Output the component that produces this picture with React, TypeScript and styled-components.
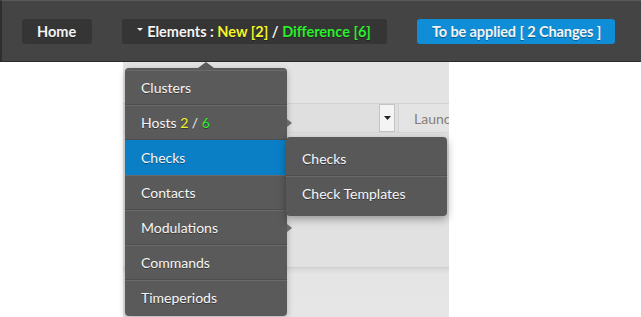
import styled, { createGlobalStyle } from "styled-components";

const GlobalStyle = createGlobalStyle`
  html, body {
    margin: 0;
    padding: 0;
    background: #ffffff;
    font-family: Lato, "Liberation Sans", sans-serif;
  }
`;

interface MenuEntry {
  label: string;
  counts?: { fresh: number; diff: number };
  hasChildren?: boolean;
  active?: boolean;
  children?: string[];
}

const menuItems: MenuEntry[] = [
  { label: "Clusters" },
  { label: "Hosts", counts: { fresh: 2, diff: 6 }, hasChildren: true },
  { label: "Checks", hasChildren: true, active: true, children: ["Checks", "Check Templates"] },
  { label: "Contacts" },
  { label: "Modulations", hasChildren: true },
  { label: "Commands" },
  { label: "Timeperiods" },
];

const App = () => {
  return (
    <Page>
      <GlobalStyle />
      <TopBar>
        <BarButton>
          <span>Home</span>
        </BarButton>
        <BarButton>
          <Caret />
          <span>
            Elements : <NewText>New [2]</NewText> / <DiffText>Difference [6]</DiffText>
          </span>
        </BarButton>
        <BarButton primary>
          <span>To be applied [ 2 Changes ]</span>
        </BarButton>
      </TopBar>

      <Content>
        <Panel>
          <PanelHead />
          <Toolbar>
            <SelectBox>
              <SelectArrow>
                <svg width="7" height="4" viewBox="0 0 7 4">
                  <path d="M0 0 L7 0 L3.5 4 Z" fill="#222" />
                </svg>
              </SelectArrow>
            </SelectBox>
            <LaunchButton>Launch</LaunchButton>
          </Toolbar>
          <PanelBody />
          <PanelFoot />
        </Panel>

        <Menu>
          <MenuPointer />
          {menuItems.map((item) => (
            <MenuItem key={item.label} active={item.active}>
              <span>
                {item.label}
                {item.counts && (
                  <>
                    {" "}
                    <NewText>{item.counts.fresh}</NewText> / <DiffText>{item.counts.diff}</DiffText>
                  </>
                )}
              </span>
              {item.hasChildren && <SubArrow />}
              {item.children && (
                <SubMenu>
                  {item.children.map((child) => (
                    <MenuItem key={child}>{child}</MenuItem>
                  ))}
                </SubMenu>
              )}
            </MenuItem>
          ))}
        </Menu>
      </Content>
    </Page>
  );
};

export default App;

const Page = styled.div`
  width: 641px;
  height: 317px;
  overflow: hidden;
  display: flex;
  flex-direction: column;
`;

const TopBar = styled.div`
  height: 60px;
  flex-shrink: 0;
  display: flex;
  align-items: center;
  gap: 30px;
  padding-left: 20px;
  background: #444444;
  border-top: 1px solid #5a5a5a;
  border-left: 2px solid #2e2e2e;
  border-bottom: 1px solid #2a2a2a;
`;

const BarButton = styled.div<{ primary?: boolean }>`
  height: 25px;
  display: flex;
  align-items: center;
  padding: ${(props) => (props.primary ? "0 14px 0 15px" : "0 16px 0 15px")};
  border-radius: 3px;
  background: ${(props) => (props.primary ? "#0f8dd6" : "#353535")};
  color: #f4f4f4;
  font-size: 14.5px;
  font-weight: 700;
  letter-spacing: ${(props) => (props.primary ? "-0.1px" : "0")};
  white-space: pre;
  text-shadow: 0 1px 0 rgba(0, 0, 0, 0.35);
`;

const Caret = styled.span`
  width: 0;
  height: 0;
  margin-right: 4px;
  margin-top: -3px;
  border-left: 3px solid transparent;
  border-right: 3px solid transparent;
  border-top: 3px solid #f2f2f2;
`;

const NewText = styled.span`
  color: #f5f52a;
`;

const DiffText = styled.span`
  color: #2bef2b;
`;

const Content = styled.div`
  position: relative;
  flex: 1;
  display: flex;
  padding-left: 123px;
`;

const Panel = styled.div`
  width: 326px;
  display: flex;
  flex-direction: column;
  background: #e2e2e2;
`;

const PanelHead = styled.div`
  height: 41px;
  border-bottom: 1px solid #d2d2d2;
  background: #e3e3e3;
`;

const Toolbar = styled.div`
  height: 28px;
  display: flex;
  align-items: stretch;
  gap: 3px;
  border-bottom: 1px solid #d6d6d6;
  background: #dfdfdf;
`;

const SelectBox = styled.div`
  width: 272px;
  display: flex;
  justify-content: flex-end;
`;

const SelectArrow = styled.div`
  width: 14px;
  display: flex;
  align-items: center;
  justify-content: center;
  background: #f4f4f4;
  border: 1px solid #c4c4c4;
`;

const LaunchButton = styled.div`
  flex: 1;
  display: flex;
  align-items: center;
  padding-left: 15px;
  overflow: hidden;
  white-space: nowrap;
  background: #e4e4e4;
  border-left: 1px solid #d4d4d4;
  color: #857e78;
  font-size: 14px;
`;

const PanelBody = styled.div`
  height: 134px;
  background: #e1e1e1;
  border-bottom: 1px solid #cfcfcf;
`;

const PanelFoot = styled.div`
  flex: 1;
  background: linear-gradient(#d6d6d6, #e5e5e5 6px, #e6e6e6);
`;

const Menu = styled.div`
  position: absolute;
  left: 125px;
  top: 6px;
  width: 162px;
  padding: 2px 0 1px;
  background: #5a5a5a;
  border-radius: 4px;
  box-shadow: 0 2px 6px rgba(0, 0, 0, 0.25);
`;

const MenuPointer = styled.div`
  position: absolute;
  left: 73px;
  top: -6px;
  width: 0;
  height: 0;
  border-left: 8px solid transparent;
  border-right: 8px solid transparent;
  border-bottom: 6px solid #5a5a5a;
`;

const MenuItem = styled.div<{ active?: boolean }>`
  position: relative;
  height: 33px;
  display: flex;
  align-items: center;
  padding-left: 16px;
  color: #f6f6f6;
  font-size: 14px;
  white-space: pre;
  text-shadow: 0 1px 0 rgba(0, 0, 0, 0.4);
  background: ${(props) => (props.active ? "#0a7fc6" : "transparent")};
  border-top: 1px solid ${(props) => (props.active ? "#0a7fc6" : "#6a6a6a")};
  border-bottom: 1px solid ${(props) => (props.active ? "#0a7fc6" : "#4e4e4e")};

  &:first-of-type {
    border-top-color: transparent;
  }
  &:last-child {
    border-bottom-color: transparent;
  }
`;

const SubArrow = styled.span`
  position: absolute;
  right: -5px;
  top: 13px;
  width: 0;
  height: 0;
  border-top: 4px solid transparent;
  border-bottom: 4px solid transparent;
  border-left: 5px solid #6a6a6a;
`;

const SubMenu = styled.div`
  position: absolute;
  left: 161px;
  top: -4px;
  width: 161px;
  padding: 4px 0 5px;
  background: #585858;
  border-radius: 4px;
  box-shadow: 0 3px 8px rgba(0, 0, 0, 0.35);
  z-index: 2;
`;
